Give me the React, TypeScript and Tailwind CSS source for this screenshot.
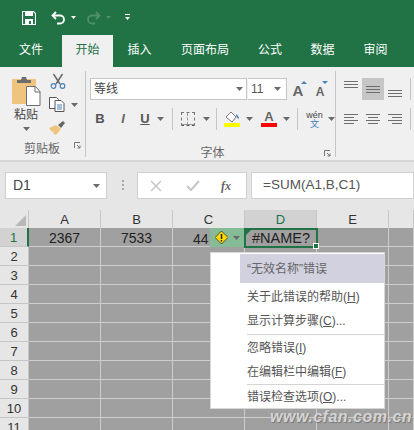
import type { ReactNode } from "react";

const Caret = ({ className = "" }: { className?: string }) => (
    <svg width="7" height="4" viewBox="0 0 7 4" className={className}>
        <path d="M0 0h7L3.500 4z" fill="#6a6a6a" />
    </svg>
);

const Launcher = ({ className = "" }: { className?: string }) => (
    <svg width="7" height="7" viewBox="0 0 7 7" className={`absolute right-[4px] ${className}`}>
        <path d="M.5 6V.5H6M3 3l3 3M6 3.500V6H3.500" fill="none" stroke="#777" />
    </svg>
);

const Lines = ({ widths, align = "center" }: { widths: number[]; align?: string }) => (
    <div className={`flex flex-col gap-[2px] ${align === "left" ? "items-start" : align === "right" ? "items-end" : "items-center"}`}>
        {widths.map((w, i) => (
            <div key={i} className="h-px bg-[#6e6e6e]" style={{ width: w }} />
        ))}
    </div>
);

const Sep = () => <div className="w-px h-[22px] bg-[#c6c6c6]" />;

const ClipboardGroup = () => (
    <div className="w-[85px] shrink-0 flex flex-col h-full">
        <div className="flex h-[77px]">
            <div className="w-[49px] flex flex-col items-center pl-[3px]">
                <svg width="30" height="31" viewBox="0 0 30 31" className="mt-[8px]">
                    <rect x="1" y="4" width="24" height="25" rx="1" fill="#eec47f" />
                    <path d="M6 8V5h4l1-3h4l1 3h4v3z" fill="#6d6d6d" />
                    <path d="M15.500 11.500h9l4.500 5v14H15.500z" fill="#fff" stroke="#6d6d6d" />
                    <path d="M24 12v5h5" fill="none" stroke="#6d6d6d" />
                </svg>
                <span className="text-[12px] leading-[16px] text-[#444] mt-[1px]">粘贴</span>
                <Caret className="mt-[4px]" />
            </div>
            <div className="flex flex-col items-start">
                <svg width="16" height="16" viewBox="0 0 16 16" className="mt-[6px] ml-[1px]">
                    <path d="M3.500 1l6.500 10M12.500 1L6 11" stroke="#6a6a6a" strokeWidth="1.500" />
                    <circle cx="3.500" cy="13" r="2.300" fill="none" stroke="#4a80b8" strokeWidth="1.200" />
                    <circle cx="12.500" cy="13" r="2.300" fill="none" stroke="#4a80b8" strokeWidth="1.200" />
                </svg>
                <div className="flex items-center mt-[8px]">
                    <svg width="16" height="15" viewBox="0 0 16 15">
                        <path d="M.5.500h7l2 2v9H.5z" fill="#fff" stroke="#555" />
                        <path d="M6 3.500h6l3 3v8H6z" fill="#fff" stroke="#555" />
                        <path d="M8 8h5M8 10h5M8 12h5" stroke="#4a80b8" />
                    </svg>
                    <Caret className="ml-[6px]" />
                </div>
                <svg width="17" height="15" viewBox="0 0 17 15" className="mt-[8px]">
                    <path d="M0 8l7-3 5 4-5 6-3-2 1-2-2 1z" fill="#eec47f" />
                    <path d="M9 5l5-4 2 2-4 5z" fill="#666" />
                </svg>
            </div>
        </div>
        <div className="relative flex-1 text-center pr-[1px]">
            <span className="text-[12px] leading-[14px] text-[#666]">剪贴板</span>
            <Launcher className="top-[6px]" />
        </div>
    </div>
);

const FontGroup = () => (
    <div className="w-[249px] shrink-0 flex flex-col h-full pl-[4px]">
        <div className="flex items-center h-[22px] mt-[11px]">
            <div className="w-[157px] h-[22px] bg-white border border-[#c6c6c6] flex items-center justify-between pl-[3px] pr-[3px]">
                <span className="text-[12px] text-[#444]">等线</span>
                <Caret />
            </div>
            <div className="w-[39px] h-[22px] bg-white border border-[#c6c6c6] border-l-0 ml-[1px] flex items-center justify-between pl-[3px] pr-[5px]">
                <span className="text-[12px] text-[#555]">11</span>
                <Caret />
            </div>
            <div className="relative ml-[1px] w-[20px] h-[22px] flex items-end justify-center">
                <span className="text-[15px] leading-[18px] font-bold text-[#666]">A</span>
                <svg width="6" height="3" viewBox="0 0 6 3" className="absolute right-[1px] top-[3px]"><path d="M0 3h6L3 0z" fill="#4a80b8" /></svg>
            </div>
            <div className="relative ml-[2px] w-[20px] h-[22px] flex items-end justify-center">
                <span className="text-[12px] leading-[16px] font-bold text-[#666]">A</span>
                <svg width="6" height="3" viewBox="0 0 6 3" className="absolute right-[2px] top-[3px]"><path d="M0 0h6L3 3z" fill="#4a80b8" /></svg>
            </div>
        </div>
        <div className="flex items-center h-[22px] mt-[8px]">
            <span className="w-[20px] text-center text-[13px] font-bold text-[#555]">B</span>
            <span className="ml-[2px] w-[22px] text-center text-[13px] font-bold italic text-[#666]">I</span>
            <span className="ml-[1px] w-[20px] text-center text-[13px] font-bold text-[#555] underline">U</span>
            <Caret className="ml-[2px]" />
            <div className="ml-[8px]"><Sep /></div>
            <div className="ml-[8px] w-[14px] h-[14px] border border-dashed border-[#777] border-b-[#555] grid grid-cols-2">
                <div className="border-r border-b border-dashed border-[#999]" />
                <div className="border-b border-dashed border-[#999]" />
            </div>
            <Caret className="ml-[8px]" />
            <div className="ml-[6px]"><Sep /></div>
            <div className="ml-[7px] flex flex-col items-center w-[16px]">
                <svg width="16" height="12" viewBox="0 0 16 12">
                    <path d="M2 6l5-5 5 5-4 5z" fill="#fff" stroke="#777" />
                    <path d="M12 3c2 1 3 3 3 5-2-1-3-2-3-5z" fill="#4a80b8" />
                </svg>
                <div className="w-[16px] h-[4px] bg-[#ffff00]" />
            </div>
            <Caret className="ml-[6px]" />
            <div className="ml-[8px] flex flex-col items-center w-[16px]">
                <span className="text-[13px] leading-[12px] font-bold text-[#666]">A</span>
                <div className="w-[16px] h-[4px] bg-[#ff0000]" />
            </div>
            <Caret className="ml-[6px]" />
            <div className="ml-[7px]"><Sep /></div>
            <div className="ml-[8px] flex flex-col items-center w-[17px]">
                <span className="text-[9px] leading-[10px] text-[#444]">wén</span>
                <span className="text-[9px] leading-[9px] text-[#3f7fc0]">文</span>
            </div>
            <Caret className="ml-[5px]" />
        </div>
        <div className="relative flex-1 text-center mt-[10px]">
            <span className="text-[12px] leading-[14px] text-[#666]">字体</span>
            <Launcher className="top-[10px]" />
        </div>
    </div>
);

const AlignGroup = () => (
    <div className="flex-1 flex flex-col pl-[4px]">
        <div className="flex h-[22px] mt-[11px]">
            <div className="w-[22px] flex justify-center pt-[3px]"><Lines widths={[14, 14, 14]} /></div>
            <div className="w-[22px] flex justify-center items-center bg-[#c6c6c6]"><Lines widths={[14, 14, 14]} /></div>
            <div className="w-[22px] flex justify-center items-end pb-[3px]"><Lines widths={[14, 14, 14]} /></div>
            <div className="ml-[4px]"><Sep /></div>
        </div>
        <div className="flex h-[22px] mt-[8px] items-center">
            <div className="w-[22px] flex justify-center"><Lines widths={[14, 10, 14, 10]} align="left" /></div>
            <div className="w-[22px] flex justify-center"><Lines widths={[14, 10, 14, 10]} /></div>
            <div className="w-[22px] flex justify-center"><Lines widths={[14, 10, 14, 10]} align="right" /></div>
            <div className="ml-[4px]"><Sep /></div>
        </div>
    </div>
);

const cols = ["A", "B", "C", "D", "E", ""];
const rows = [1, 2, 3, 4, 5, 6, 7, 8, 9, 10, 11];

const Sheet = () => (
    <div className="grid grid-cols-[29px_72px_72px_72px_72px_72px_1fr] grid-rows-[18px] auto-rows-[19px]">
        <div className="bg-[#e6e6e6] border-r border-[#c6c6c6] flex items-end justify-end pr-[2px] pb-[2px]">
            <svg width="11" height="11" viewBox="0 0 11 11"><path d="M11 0v11H0z" fill="#b9b9b9" /></svg>
        </div>
        {cols.map((c, i) => (
            <div
                key={i}
                className={`border-r border-[#c6c6c6] flex items-center justify-center pt-[1px] text-[13px] ${c === "D" ? "bg-[#d2d2d2] text-[#217346]" : "bg-[#e6e6e6] text-[#333]"}`}
            >
                {c}
            </div>
        ))}
        {rows.map((r) => (
            <div key={r} className="contents">
                <div
                    className={`border-b border-[#c6c6c6] flex items-center justify-center pt-[1px] text-[13px] ${r === 1 ? "bg-[#d2d2d2] text-[#217346] border-r-2 border-r-[#217346]" : "bg-[#e6e6e6] text-[#333] border-r border-r-[#c6c6c6]"}`}
                >
                    {r}
                </div>
                {cols.map((c, i) => (
                    <div key={i} className="bg-[#a0a0a0] border-r border-b border-[#cdcdcd] flex items-center justify-center pt-[2px] text-[14px] text-[#222] overflow-hidden">
                        {r === 1 && c === "A" && "2367"}
                        {r === 1 && c === "B" && "7533"}
                    </div>
                ))}
            </div>
        ))}
    </div>
);

const MenuItem = ({ label }: { label: ReactNode }) => (
    <div className="h-[24px] pl-[36px] flex items-center text-[12px] text-[#555]">{label}</div>
);

const ErrorMenu = () => (
    <div className="absolute left-[210px] top-[252px] w-[175px] h-[157px] bg-white border border-[#d8d8d8]">
        <div className="ml-[29px] mt-[1px] h-[29px] pl-[7px] bg-[#d2d1df] flex items-center text-[12px] text-[#666]">“无效名称”错误</div>
        <div className="h-[1px]" />
        <div className="mt-[1px]"><MenuItem label={<>关于此错误的帮助(<u>H</u>)</>} /></div>
        <MenuItem label={<>显示计算步骤(<u>C</u>)...</>} />
        <div className="ml-[36px] h-px bg-[#d4d4d4] mt-[1px] mb-[1px]" />
        <MenuItem label={<>忽略错误(<u>I</u>)</>} />
        <MenuItem label={<>在编辑栏中编辑(<u>F</u>)</>} />
        <div className="ml-[36px] h-px bg-[#d4d4d4]" />
        <MenuItem label={<>错误检查选项(<u>O</u>)...</>} />
    </div>
);

export default function App() {
    return (
        <div className="relative w-[414px] h-[430px] overflow-hidden bg-[#e6e6e6] font-['Liberation_Sans','Noto_Sans_CJK_SC',sans-serif]">
            {/* Title bar */}
            <div className="h-[35px] bg-[#217346] flex items-center pl-[22px]">
                <svg width="14" height="14" viewBox="0 0 14 14">
                    <path d="M.5.500h11l2 2v11H.5z" fill="none" stroke="#fff" strokeWidth="1.200" />
                    <rect x="3" y="1" width="8" height="4" fill="#fff" />
                    <rect x="3" y="8" width="8" height="5.500" fill="#fff" />
                    <rect x="7" y="10" width="2" height="3" fill="#217346" />
                </svg>
                <svg width="15" height="14" viewBox="0 0 15 14" className="ml-[15px]">
                    <path d="M5 1L1.500 4.500 5 8M2 4.500h7a4 4 0 0 1 0 8H6" fill="none" stroke="#fff" strokeWidth="1.800" />
                </svg>
                <svg width="5" height="3" viewBox="0 0 5 3" className="ml-[5px]"><path d="M0 0h5L2.500 3z" fill="#fff" /></svg>
                <svg width="15" height="14" viewBox="0 0 15 14" className="ml-[10px]">
                    <path d="M10 1l3.500 3.500L10 8M13 4.500H6a4 4 0 0 0 0 8h3" fill="none" stroke="#4f8f6b" strokeWidth="1.800" />
                </svg>
                <svg width="5" height="3" viewBox="0 0 5 3" className="ml-[5px]"><path d="M0 0h5L2.500 3z" fill="#4f8f6b" /></svg>
                <svg width="5" height="7" viewBox="0 0 5 7" className="ml-[14px]">
                    <path d="M0 .5h5" stroke="#fff" />
                    <path d="M0 3h5L2.500 6z" fill="#fff" />
                </svg>
            </div>
            {/* Tabs */}
            <div className="h-[32px] bg-[#217346] flex text-[12px] text-white">
                <div className="w-[62px] flex items-center justify-center pb-[3px]">文件</div>
                <div className="w-[51px] bg-[#f0f0f0] text-[#217346] flex items-center justify-center pb-[3px]">开始</div>
                <div className="w-[53px] flex items-center justify-center pb-[3px]">插入</div>
                <div className="w-[78px] flex items-center justify-center pb-[3px]">页面布局</div>
                <div className="w-[52px] flex items-center justify-center pb-[3px]">公式</div>
                <div className="w-[53px] flex items-center justify-center pb-[3px]">数据</div>
                <div className="w-[53px] flex items-center justify-center pb-[3px]">审阅</div>
            </div>
            {/* Ribbon */}
            <div className="h-[95px] bg-[#f0f0f0] border-b-2 border-[#d5d5d5] flex">
                <ClipboardGroup />
                <div className="w-px h-[86px] mt-[4px] bg-[#c6c6c6]" />
                <FontGroup />
                <div className="w-px h-[86px] mt-[4px] bg-[#c6c6c6]" />
                <AlignGroup />
            </div>
            {/* Formula bar */}
            <div className="h-[48px] flex items-start pt-[10px]">
                <div className="ml-[5px] w-[102px] h-[27px] bg-white border border-[#d0d0d0] flex items-center justify-between pl-[7px] pr-[6px] text-[14px] text-[#444]">
                    D1
                    <Caret />
                </div>
                <div className="ml-[15px] mt-[8px] flex flex-col gap-[2px]">
                    <div className="w-[2px] h-[2px] bg-[#a8a8a8]" />
                    <div className="w-[2px] h-[2px] bg-[#a8a8a8]" />
                    <div className="w-[2px] h-[2px] bg-[#a8a8a8]" />
                </div>
                <div className="ml-[13px] w-[110px] h-[27px] bg-white border border-[#d0d0d0] flex items-center">
                    <svg width="12" height="12" viewBox="0 0 12 12" className="ml-[12px]"><path d="M1 1l10 10M11 1L1 11" stroke="#c6c6c6" strokeWidth="1.500" /></svg>
                    <svg width="14" height="12" viewBox="0 0 14 12" className="ml-[24px]"><path d="M1 6l4 4 8-9" fill="none" stroke="#c6c6c6" strokeWidth="2" /></svg>
                    <span className="ml-[21px] text-[12px] italic font-bold text-[#666] font-['Liberation_Serif',serif]">fx</span>
                </div>
                <div className="ml-[4px] flex-1 h-[27px] bg-white border border-[#d0d0d0] flex items-center pl-[11px] text-[13.5px] text-[#555]">
                    =SUM(A1,B,C1)
                </div>
            </div>
            <Sheet />
            {/* C1 text runs under the smart tag */}
            <span className="absolute left-[193px] top-[229px] text-[14px] text-[#222]">44</span>
            {/* Smart tag */}
            <div className="absolute left-[210px] top-[228px] w-[34px] h-[19px] bg-[#86bb98] flex items-center pl-[5px]">
                <svg width="13" height="13" viewBox="0 0 13 13">
                    <path d="M6.500 0L13 6.500 6.500 13 0 6.500z" fill="#ffd800" stroke="#333" strokeWidth=".8" />
                    <path d="M6.500 3v5M6.500 9v1.500" stroke="#222" strokeWidth="1.500" />
                </svg>
                <Caret className="ml-[5px]" />
            </div>
            {/* Selected cell */}
            <div className="absolute left-[244px] top-[228px] w-[74px] h-[20px] border-2 border-[#217346] bg-[#a0a0a0] flex items-center pl-[6px] pt-[2px] text-[14.5px] text-[#222]">
                #NAME?
                <svg width="5" height="5" viewBox="0 0 5 5" className="absolute left-0 top-0"><path d="M0 0h5L0 5z" fill="#217346" /></svg>
                <div className="absolute right-[-3px] bottom-[-3px] w-[6px] h-[6px] bg-[#217346] border border-white" />
            </div>
            <ErrorMenu />
            <div className="absolute left-[270px] top-[405px] text-[16px] italic font-bold text-[#d4d4d4] tracking-[.5px] [text-shadow:1px_1px_1px_#777]">
                www.cfan.com.cn
            </div>
        </div>
    );
}
